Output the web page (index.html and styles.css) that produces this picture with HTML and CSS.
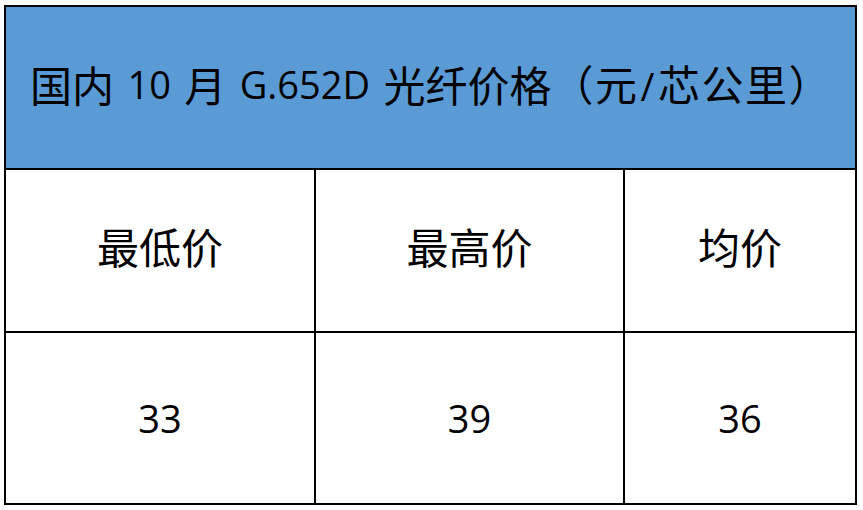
FILE: index.html
```html
<!DOCTYPE html>
<html lang="zh-CN">
<head>
<meta charset="utf-8">
<title>光纤价格</title>
<link rel="stylesheet" href="styles.css">
</head>
<body>
<div class="table">
  <div class="cell head">国内 <span class="lat">10</span> 月 <span class="lat">G.652D</span> 光纤价格<span class="tail">（元<span class="lat slash">/</span>芯公里）</span></div>
  <div class="cell label">最低价</div>
  <div class="cell label">最高价</div>
  <div class="cell label">均价</div>
  <div class="cell"><span class="lat">33</span></div>
  <div class="cell"><span class="lat">39</span></div>
  <div class="cell"><span class="lat">36</span></div>
</div>
</body>
</html>
```

FILE: styles.css
```css
html, body {
  margin: 0;
  padding: 0;
  background: #ffffff;
}
body {
  font-family: "Noto Sans CJK SC", "Open Sans", sans-serif;
  color: #000000;
}
.table {
  margin: 5px 0 0 4px;
  width: 853px;
  height: 500px;
  box-sizing: border-box;
  display: grid;
  grid-template-columns: 308px 307px 230px;
  grid-template-rows: 161px 161px 170px;
  gap: 2px;
  padding: 2px;
  background: #000000;
}
.cell {
  background: #ffffff;
  display: flex;
  align-items: center;
  justify-content: center;
  font-size: 42px;
  line-height: 1;
  font-weight: 400;
}
.label {
  padding-bottom: 10px;
}
.head {
  grid-column: 1 / 4;
  background: #5b9bd5;
  justify-content: flex-start;
  padding-left: 24px;
  padding-bottom: 8px;
  white-space: pre;
  word-spacing: 4px;
}
.lat {
  font-family: "Open Sans", sans-serif;
  font-size: 38px;
  word-spacing: 0;
}
.tail {
  letter-spacing: 1.5px;
}
.slash {
  margin: 0 2px;
}
```
